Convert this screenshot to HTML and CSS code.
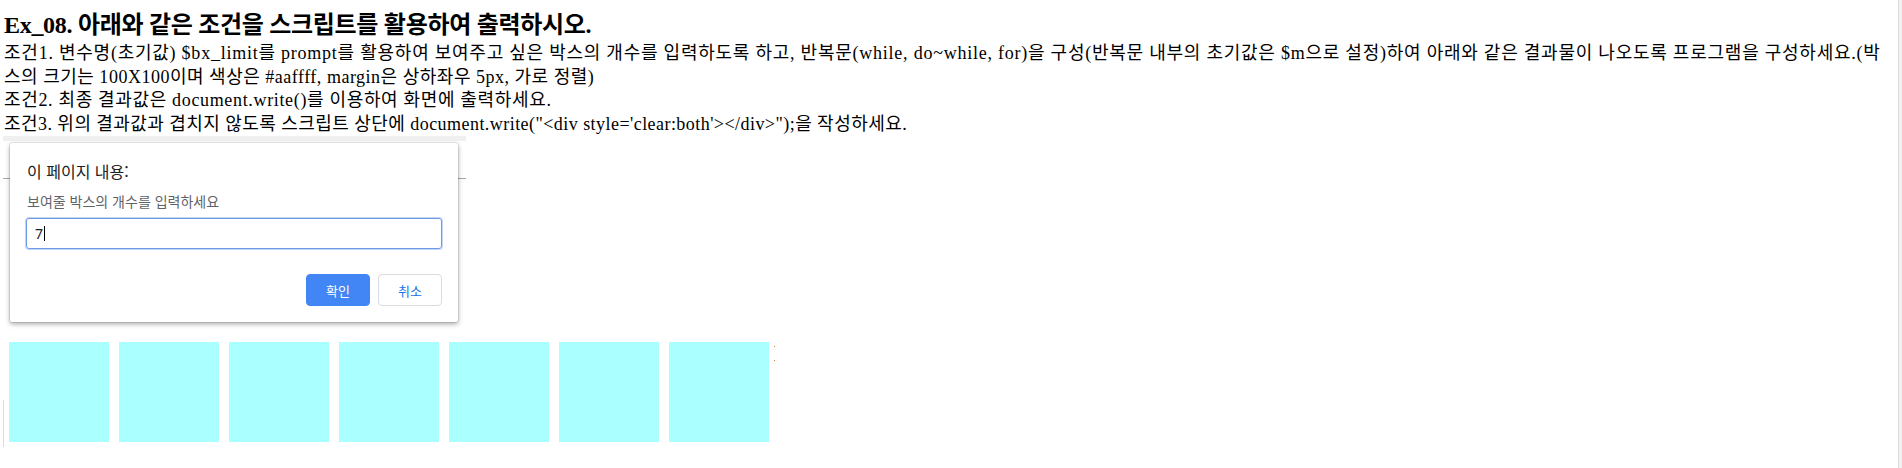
FILE: index.html
```html
<!DOCTYPE html>
<html lang="ko">
<head>
<meta charset="utf-8">
<title>Ex_08</title>
<link rel="stylesheet" href="styles.css">
</head>
<body>
<div class="page">
  <h2 class="title">Ex_08. 아래와 같은 조건을 스크립트를 활용하여 출력하시오.</h2>
  <div class="desc">
    <div class="cond cond-1">조건1. 변수명(초기값) $bx_limit를 prompt를 활용하여 보여주고 싶은 박스의 개수를 입력하도록 하고, 반복문(while, do~while, for)을 구성(반복문 내부의 초기값은 $m으로 설정)하여 아래와 같은 결과물이 나오도록 프로그램을 구성하세요.(박<br><span class="cont">스의 크기는 100X100이며 색상은 #aaffff, margin은 상하좌우 5px, 가로 정렬)</span></div>
    <div class="cond cond-2">조건2. 최종 결과값은 document.write()를 이용하여 화면에 출력하세요.</div>
    <div class="cond cond-3">조건3. 위의 결과값과 겹치지 않도록 스크립트 상단에 document.write("&lt;div style='clear:both'&gt;&lt;/div&gt;");을 작성하세요.</div>
  </div>
  <div class="boxes">
    <div class="box"></div>
    <div class="box"></div>
    <div class="box"></div>
    <div class="box"></div>
    <div class="box"></div>
    <div class="box"></div>
    <div class="box"></div>
  </div>
</div>

<div class="marker-line"></div>
<div class="dot dot-a"></div>
<div class="dot dot-b"></div>
<div class="edge"></div>

<div class="dialog-layer">
  <div class="layer-band"></div>
  <div class="layer-rule"></div>
</div>
<div class="dialog">
  <div class="dlg-title">이 페이지 내용:</div>
  <div class="dlg-label">보여줄 박스의 개수를 입력하세요</div>
  <div class="dlg-input"><span class="dlg-value">7</span><span class="caret"></span></div>
  <div class="dlg-actions">
    <button class="btn btn-ok">확인</button>
    <button class="btn btn-cancel">취소</button>
  </div>
</div>
</body>
</html>
```

FILE: styles.css
```css
html, body {
  margin: 0;
  padding: 0;
  background: #ffffff;
}

body {
  width: 1902px;
  height: 468px;
  overflow: hidden;
  position: relative;
  font-family: "Liberation Serif", "Noto Sans CJK KR", serif;
  color: #000;
}

.page {
  padding: 0 0 0 4px;
}

.title {
  margin: 0;
  padding-top: 11px;
  font-size: 24px;
  font-weight: bold;
  line-height: 28px;
  letter-spacing: -0.3px;
}

.desc {
  margin-top: 3px;
  font-size: 18px;
  line-height: 23.5px;
}

.cond {
  white-space: nowrap;
}

/* Korean glyphs in the reference are full-width; widen runs to match */
.cond-1 { letter-spacing: 0.76px; }
.cond-1 .cont { letter-spacing: 0.51px; }
.cond-2 { letter-spacing: 0.66px; }
.cond-3 { letter-spacing: 0.45px; }

.boxes {
  display: flex;
  margin-top: 206px;
}

.box {
  width: 100px;
  height: 100px;
  margin: 0 5px;
  background: #aaffff;
  flex: none;
}

.marker-line {
  position: absolute;
  left: 3px;
  top: 400px;
  width: 1px;
  height: 47px;
  background: #d6f27a;
}

.dot {
  position: absolute;
  left: 774px;
  width: 1px;
  height: 1px;
  background: #e8782a;
}
.dot-a { top: 346px; }
.dot-b { top: 360px; }

.edge {
  position: absolute;
  top: 0;
  right: 0;
  width: 3px;
  height: 468px;
  background: #f1f1f1;
  border-left: 1px solid #dddddd;
}

.dialog-layer {
  position: absolute;
  left: 3px;
  top: 136px;
  width: 463px;
  height: 190px;
}

.layer-band {
  height: 5px;
  background: #f0f0f0;
}

.layer-rule {
  margin-top: 37px;
  height: 1px;
  background: #a8a8a8;
}

.dialog {
  position: absolute;
  left: 10px;
  top: 143px;
  width: 448px;
  height: 179px;
  box-sizing: border-box;
  padding: 18px 16px 16px;
  background: #ffffff;
  border-radius: 2px;
  box-shadow: 0 0 0 1px rgba(0,0,0,0.08), 0 2px 5px rgba(0,0,0,0.35);
  font-family: "Noto Sans CJK KR", "Noto Sans", sans-serif;
}

.dlg-title {
  height: 20px;
  line-height: 20px;
  font-size: 16px;
  color: #202124;
  padding-left: 1px;
}

.dlg-label {
  margin-top: 12px;
  height: 16px;
  line-height: 16px;
  font-size: 14px;
  color: #5f6368;
  padding-left: 1px;
}

.dlg-input {
  margin-top: 9px;
  height: 31px;
  box-sizing: border-box;
  border: 1px solid #6f9ae6;
  box-shadow: 0 0 0 1px #c3d6f6;
  border-radius: 3px;
  display: flex;
  align-items: center;
  padding-left: 8px;
  font-family: "Noto Sans", sans-serif;
  font-size: 14px;
  color: #202124;
}

.caret {
  width: 1px;
  height: 15px;
  background: #000;
  margin-left: 1px;
}

.dlg-actions {
  margin-top: 25px;
  display: flex;
  justify-content: flex-end;
  gap: 8px;
}

.btn {
  width: 64px;
  height: 32px;
  box-sizing: border-box;
  border-radius: 4px;
  font-family: "Noto Sans CJK KR", sans-serif;
  font-size: 13px;
  padding: 0;
  cursor: pointer;
}

.btn-ok {
  background: #4285f4;
  border: 1px solid #4285f4;
  color: #ffffff;
}

.btn-cancel {
  background: #ffffff;
  border: 1px solid #dadce0;
  color: #1a73e8;
}
```
